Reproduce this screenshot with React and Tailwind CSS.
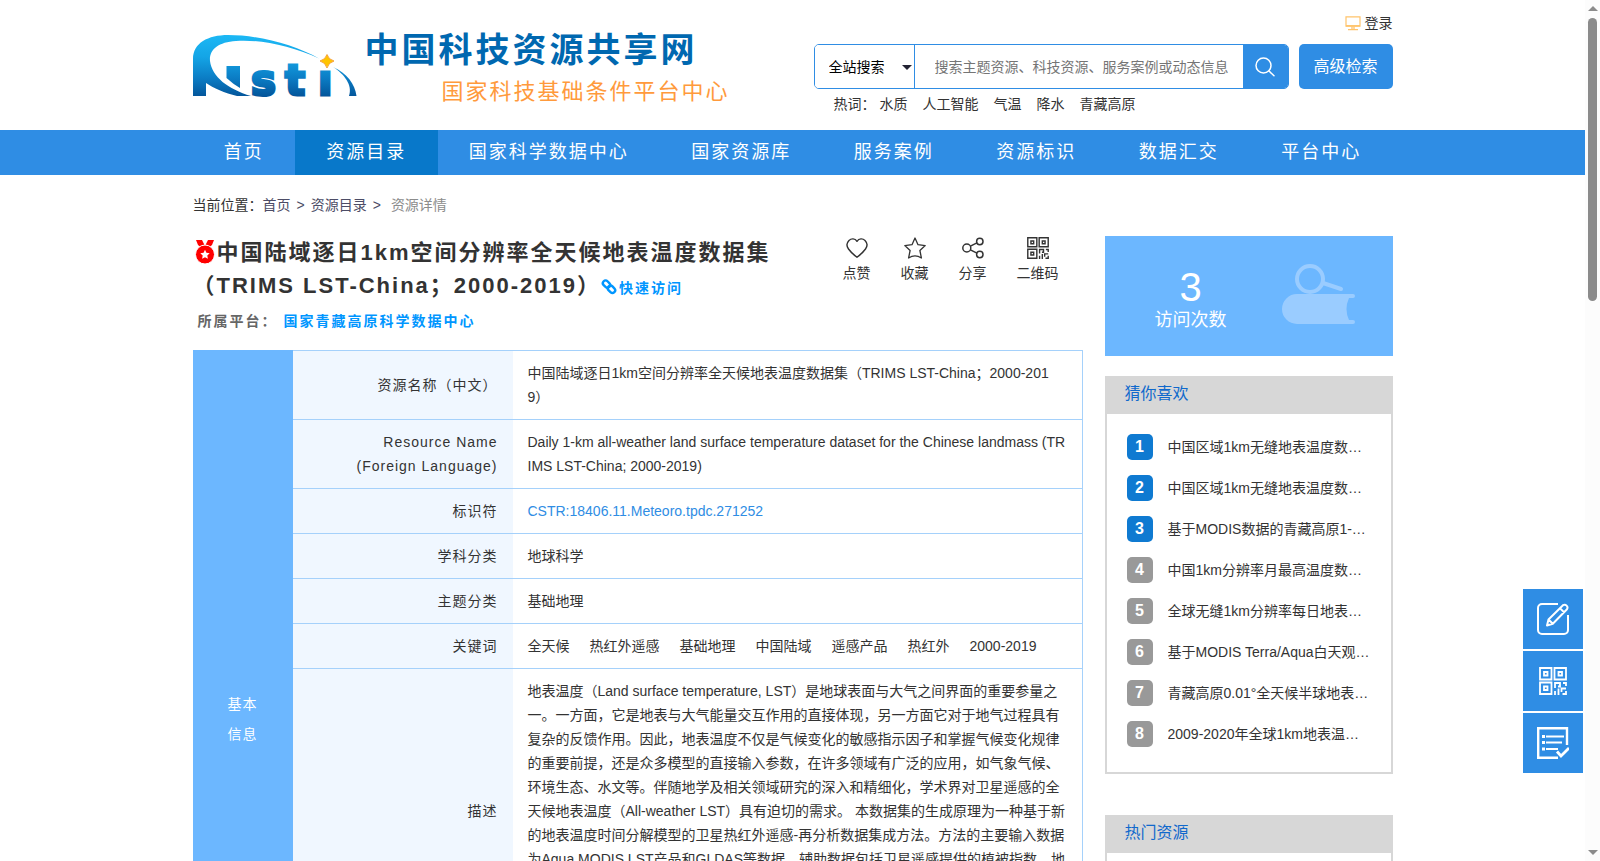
import { useState } from 'react';

const NAV = ['首页', '资源目录', '国家科学数据中心', '国家资源库', '服务案例', '资源标识', '数据汇交', '平台中心'];

const HOT_WORDS = ['水质', '人工智能', '气温', '降水', '青藏高原'];

const KEYWORDS = ['全天候', '热红外遥感', '基础地理', '中国陆域', '遥感产品', '热红外', '2000-2019'];

const RECOMMENDED = [
  '中国区域1km无缝地表温度数据集（2002-2020）',
  '中国区域1km无缝地表温度数据集（2002-2020）',
  '基于MODIS数据的青藏高原1-km分辨率地表温度数据',
  '中国1km分辨率月最高温度数据集（1901-2020）',
  '全球无缝1km分辨率每日地表温度数据集',
  '基于MODIS Terra/Aqua白天观测的地表温度数据',
  '青藏高原0.01°全天候半球地表温度数据集',
  '2009-2020年全球1km地表温度数据集',
];

const DESCRIPTION =
  '地表温度（Land surface temperature, LST）是地球表面与大气之间界面的重要参量之一。一方面，它是地表与大气能量交互作用的直接体现，另一方面它对于地气过程具有复杂的反馈作用。因此，地表温度不仅是气候变化的敏感指示因子和掌握气候变化规律的重要前提，还是众多模型的直接输入参数，在许多领域有广泛的应用，如气象气候、环境生态、水文等。伴随地学及相关领域研究的深入和精细化，学术界对卫星遥感的全天候地表温度（All-weather LST）具有迫切的需求。 本数据集的生成原理为一种基于新的地表温度时间分解模型的卫星热红外遥感-再分析数据集成方法。方法的主要输入数据为Aqua MODIS LST产品和GLDAS等数据，辅助数据包括卫星遥感提供的植被指数、地表反照率等。方法充分利用了卫星热红外遥感和再分析数据提供的地表温度高频分量、低频分量以及地表温度的空间相关性，最终重建得到较高质量的全天候地表温度数据集。评价结果表明，本数据集具有良好的图像质量和精度，可为研究提供支持。';

function Logo() {
  return (
    <svg width="164" height="62" viewBox="0 0 164 62" role="img" aria-label="Nsti" className="shrink-0">
      <defs>
        <linearGradient id="logoBlue" x1="0" y1="0" x2="0" y2="62" gradientUnits="userSpaceOnUse">
          <stop offset="0" stopColor="#1cb8f5" />
          <stop offset="0.35" stopColor="#14a5e6" />
          <stop offset="0.7" stopColor="#0b7cc4" />
          <stop offset="1" stopColor="#035499" />
        </linearGradient>
      </defs>
      <path d="M33.500 31h13.500v22q-7-4-13.500-10z" fill="url(#logoBlue)" />
      <path
        d="M0 61V24C0 8 15 0 35 0C66 0 102 10 126 23.500C99 11 65 4 43 6C25 7 16 15 17 26C19 42 35 54 58 61H44C32 58 20 53 13 48V61Z"
        fill="url(#logoBlue)"
      />
      <path d="M140 32C154 38 162 49 163.500 61H156C160 50 151 39 140 32Z" fill="url(#logoBlue)" />
      <text
        x="58 92 125"
        y="60"
        fill="url(#logoBlue)"
        stroke="url(#logoBlue)"
        strokeWidth="3"
        fontFamily="'DejaVu Sans', sans-serif"
        fontSize="42"
        fontWeight="bold"
      >
        stı
      </text>
      <path d="M134 19.500Q135.500 24.500 141 26Q135.500 27.500 134 33Q132.500 27.500 127 26Q132.500 24.500 134 19.500Z" fill="#ffc400" stroke="#f3901d" strokeWidth="0.800" />
    </svg>
  );
}

function MonitorIcon() {
  return (
    <svg width="16" height="15" viewBox="0 0 16 15" fill="none" stroke="#ffc36b">
      <path d="M1 .8h14v9.400H1z" strokeWidth="1.200" />
      <path d="M1 9.800h14" strokeWidth="1.500" />
      <path d="M7 10.500V13M9 10.500V13M3 13.700h10" strokeWidth="1.300" />
    </svg>
  );
}

function SearchIcon() {
  return (
    <svg width="20" height="20" viewBox="0 0 20 20" fill="none" stroke="#fff" strokeWidth="1.500" strokeLinecap="round">
      <circle cx="8.500" cy="8.500" r="7.500" />
      <path d="M14 14l5 4.800" />
    </svg>
  );
}

function MedalIcon() {
  return (
    <svg width="20" height="24" viewBox="0 0 20 24" className="mx-0.5 inline-block align-[-4px]">
      <path d="M1 0h6l2.500 5L6 7.500L3 5zM19 0h-6l-2.500 5L14 7.500L17 5z" fill="#f00" />
      <circle cx="10" cy="14.500" r="9.500" fill="#f00" stroke="#fff" strokeWidth="1" />
      <path
        d="M10 9.800l1.400 3 3.300.4-2.400 2.300.6 3.300-2.900-1.600-2.900 1.600.6-3.300-2.400-2.300 3.300-.4z"
        fill="#fff"
      />
    </svg>
  );
}

function ChainIcon() {
  return (
    <svg width="16" height="16" viewBox="0 0 16 16" fill="none" stroke="#0096ff" strokeWidth="2.400" className="mr-0.5 inline-block align-[-2px]">
      <rect x="1.500" y="2.400" width="8" height="5.400" rx="2.700" transform="rotate(45 5.500 5.100)" />
      <rect x="6.500" y="7.600" width="8" height="5.400" rx="2.700" transform="rotate(45 10.500 10.300)" />
    </svg>
  );
}

function HeartIcon() {
  return (
    <svg width="22" height="22" viewBox="0 0 22 22" fill="none" stroke="#333" strokeWidth="1.400" strokeLinejoin="round">
      <path d="M11 4.300C9 1.200 5.200 1.300 3 3.400C.6 5.800.5 9.200 2.500 12C4.500 14.800 8 18 11 20.300C14 18 17.500 14.800 19.500 12C21.500 9.200 21.400 5.800 19 3.400C16.800 1.300 13 1.200 11 4.300Z" />
    </svg>
  );
}

function StarIcon() {
  return (
    <svg width="22" height="22" viewBox="0 0 22 22" fill="none" stroke="#333" strokeWidth="1.300" strokeLinejoin="round">
      <path d="M11 1L14 7.700L21.200 8.600L15.900 13.500L17.400 21Q11 16.800 4.600 21L6.100 13.500L.8 8.600L8 7.700Z" />
    </svg>
  );
}

function ShareIcon() {
  return (
    <svg width="22" height="22" viewBox="0 0 22 22" fill="none" stroke="#333" strokeWidth="1.500">
      <circle cx="4.800" cy="11" r="4" />
      <circle cx="17.800" cy="4.500" r="3.200" />
      <circle cx="17.800" cy="17.500" r="3.200" />
      <path d="M8.400 9.200l6.500-3.300M8.400 12.800l6.500 3.300" />
    </svg>
  );
}

function QrIcon({ color, size }) {
  return (
    <svg width={size} height={size} viewBox="0 0 28 28" fill="none" stroke={color} strokeWidth="1.800">
      <path d="M1 1h11.500v11.500H1zM15.500 1H27v11.500H15.500zM1 15.500h11.500V27H1z" />
      <path d="M5 5h3.500v3.500H5zM19.500 5H23v3.500h-3.500zM5 19.500h3.500V23H5z" />
      <path d="M16 21v-5h5v3.500h-2M24 16h3v3M27 21.500h-4.500V25M19.500 21.500V28M16 24v4M27 24v3h-3.500" />
    </svg>
  );
}

function BookIcon() {
  return (
    <svg width="76" height="60" viewBox="0 0 76 60" fill="none" stroke="#9accff">
      <circle cx="29" cy="15" r="13" strokeWidth="4" />
      <path d="M42 19l18 6" strokeWidth="4" strokeLinecap="round" />
      <path
        d="M16 30H72a2 2 0 0 1 0 4h-4q-5 11 0 22h4a2 2 0 0 1 0 4H16a15 15 0 0 1 0-30z"
        fill="#9accff"
        stroke="none"
      />
    </svg>
  );
}

function EditIcon() {
  return (
    <svg width="32" height="32" viewBox="0 0 32 32" fill="none" stroke="#fff" strokeWidth="2" strokeLinejoin="round">
      <path d="M21 1H5a4 4 0 0 0-4 4v22a4 4 0 0 0 4 4h22a4 4 0 0 0 4-4V12" />
      <path d="M10 22.500l1.500-6L26 2.200a2.900 2.900 0 0 1 4 4L15.800 20.700zM11.500 16.500l4.300 4.200M23 5.200l4.200 4.200" />
    </svg>
  );
}

function SurveyIcon() {
  return (
    <svg width="32" height="32" viewBox="0 0 32 32" fill="none" stroke="#fff" strokeWidth="2.400">
      <path d="M21 30.800H1.200V1.200H30V18" />
      <path d="M9 9.500h18M9 15.500h16M9 22h12" strokeWidth="2.200" />
      <path d="M5 9.500h3M5 15.500h3M5 22h3" strokeWidth="3.200" />
      <path d="M20 24.500l4 4.500 8-8" strokeWidth="2.800" />
    </svg>
  );
}

function Header() {
  const [scope, setScope] = useState('all');
  const [query, setQuery] = useState('');

  return (
    <header className="mx-auto flex h-[130px] w-full max-w-[1200px] justify-between">
      <div className="flex">
        <a href="#" className="pt-[35px]">
          <Logo />
        </a>
        <div className="pt-[26px] pl-2">
          <p className="text-[34px] leading-12 font-bold tracking-[3px] whitespace-nowrap text-[#0068b0]">
            中国科技资源共享网
          </p>
          <p className="pt-0.5 pl-[77px] text-[22px] leading-8 tracking-[2px] whitespace-nowrap text-[#ff9a3c]">
            国家科技基础条件平台中心
          </p>
        </div>
      </div>

      <div className="w-[579px] pt-3">
        <div className="flex h-[22px] justify-end">
          <a href="#" className="flex items-center gap-1 text-sm">
            <MonitorIcon />
            登录
          </a>
        </div>
        <form className="mt-2.5 flex h-[45px] gap-2.5" onSubmit={(e) => e.preventDefault()}>
          <div className="flex min-w-0 flex-1 overflow-hidden rounded-[5px] border border-[#2f8de4]">
            <div className="relative w-[100px] shrink-0 border-r border-[#2f8de4]">
              <select
                aria-label="搜索范围"
                value={scope}
                onChange={(e) => setScope(e.target.value)}
                className="h-full w-full appearance-none bg-white pl-3.5 text-sm text-black outline-none"
              >
                <option value="all">全站搜索</option>
                <option value="resource">资源搜索</option>
              </select>
              <svg width="10" height="5" viewBox="0 0 10 5" className="pointer-events-none absolute top-5 right-0.5">
                <path d="M0 0h10L5 5z" fill="#223" />
              </svg>
            </div>
            <input
              type="text"
              aria-label="搜索"
              value={query}
              onChange={(e) => setQuery(e.target.value)}
              placeholder="搜索主题资源、科技资源、服务案例或动态信息"
              className="min-w-0 flex-1 pl-5 text-sm outline-none placeholder:text-[#757575]"
            />
            <button type="submit" aria-label="搜索" className="flex w-[45px] shrink-0 items-center justify-center bg-[#2f8de4]">
              <SearchIcon />
            </button>
          </div>
          <button type="button" className="w-[94px] rounded-[5px] bg-[#2f8de4] text-base text-white">
            高级检索
          </button>
        </form>
        <div className="flex pt-1 pl-5 text-sm leading-[22px]">
          <span className="mr-1">热词：</span>
          <div className="flex gap-[15px]">
            {HOT_WORDS.map((w) => (
              <a key={w} href="#">{w}</a>
            ))}
          </div>
        </div>
      </div>
    </header>
  );
}

function NavBar() {
  return (
    <nav className="bg-[#2f8de4]">
      <div className="mx-auto flex w-full max-w-[1200px]">
        {NAV.map((item, i) => (
          <a
            key={item}
            href="#"
            className={`flex-auto px-[31px] text-center text-lg leading-[45px] tracking-[2px] whitespace-nowrap text-white ${i === 1 ? 'bg-[#0878ca]' : ''}`}
          >
            {item}
          </a>
        ))}
      </div>
    </nav>
  );
}

function Action({ icon, label }) {
  return (
    <button type="button" className="flex flex-col items-center gap-0.5 text-sm leading-6">
      {icon}
      {label}
    </button>
  );
}

function Row({ label, head, children }) {
  return (
    <tr>
      {head}
      <th scope="row" className="border-t border-[#a5d1fb] bg-[#f0f7ff] px-[15px] py-2.5 text-right font-normal tracking-[1px]">
        {label}
      </th>
      <td className="border-t border-r border-[#a5d1fb] px-[15px] py-2.5 break-all">{children}</td>
    </tr>
  );
}

function DetailTable() {
  const head = (
    <th scope="rowgroup" rowSpan={10} className="bg-[#6cb7ff] px-8 text-center leading-[30px] font-normal tracking-[1px] text-white">
      基本
      <br />
      信息
    </th>
  );

  return (
    <table className="mt-[17px] w-full table-fixed border-separate border-spacing-0 text-sm leading-6">
      <colgroup>
        <col className="w-[100px]" />
        <col className="w-[220px]" />
        <col />
      </colgroup>
      <tbody>
        <Row head={head} label="资源名称（中文）">中国陆域逐日1km空间分辨率全天候地表温度数据集（TRIMS LST-China；2000-2019）</Row>
        <Row label={<>Resource Name<br />(Foreign Language)</>}>
          Daily 1-km all-weather land surface temperature dataset for the Chinese landmass (TRIMS LST-China; 2000-2019)
        </Row>
        <Row label="标识符">
          <a href="#" className="text-[#2f8de4]">CSTR:18406.11.Meteoro.tpdc.271252</a>
        </Row>
        <Row label="学科分类">地球科学</Row>
        <Row label="主题分类">基础地理</Row>
        <Row label="关键词">
          <span className="flex gap-5">
            {KEYWORDS.map((k) => (
              <span key={k}>{k}</span>
            ))}
          </span>
        </Row>
        <Row label="描述">{DESCRIPTION}</Row>
        <Row label="数据格式">TIFF</Row>
        <Row label="时间范围">2000-2019</Row>
        <Row label="共享方式">开放共享</Row>
      </tbody>
    </table>
  );
}

function Panel({ title, children }) {
  return (
    <section className="border-2 border-t-0 border-[#d7d7d7]">
      <h2 className="h-[38px] bg-[#d7d7d7] pl-[18px] text-base leading-9 text-[#1069cc]">{title}</h2>
      {children}
    </section>
  );
}

function Sidebar() {
  return (
    <aside className="w-72 shrink-0">
      <div className="flex h-[120px] items-center bg-[#6cb7ff] text-white">
        <div className="w-[172px] pt-2 text-center">
          <div className="text-[40px] leading-10">3</div>
          <div className="text-lg leading-[26px]">访问次数</div>
        </div>
        <div className="pb-1 pl-1">
          <BookIcon />
        </div>
      </div>
      <div className="mt-5 space-y-[41px]">
        <Panel title="猜你喜欢">
          <ol className="space-y-[15px] pt-5 pr-5 pb-[25px] pl-5">
            {RECOMMENDED.map((title, i) => (
              <li key={i} className="flex h-[26px] items-center">
                <span
                  className={`w-[26px] shrink-0 rounded-[5px] text-center text-base leading-[26px] font-bold text-white ${i < 3 ? 'bg-[#0f7ad1]' : 'bg-[#999]'}`}
                >
                  {i + 1}
                </span>
                <a href="#" className="ml-[15px] truncate text-sm leading-6">{title}</a>
              </li>
            ))}
          </ol>
        </Panel>
        <Panel title="热门资源">
          <div className="h-[360px]" />
        </Panel>
      </div>
    </aside>
  );
}

function FloatTools() {
  return (
    <div className="fixed right-[17px] bottom-[88px] flex flex-col gap-0.5">
      <button type="button" aria-label="意见反馈" className="flex size-[60px] items-center justify-center bg-[#2f8de4]">
        <EditIcon />
      </button>
      <button type="button" aria-label="二维码" className="flex size-[60px] items-center justify-center bg-[#2f8de4]">
        <QrIcon color="#fff" size={28} />
      </button>
      <button type="button" aria-label="问卷调查" className="flex size-[60px] items-center justify-center bg-[#2f8de4]">
        <SurveyIcon />
      </button>
    </div>
  );
}

function ScrollTrack() {
  return (
    <div className="flex w-[15px] shrink-0 flex-col items-center bg-[#fcfcfc] py-1.5">
      <svg width="10" height="5" viewBox="0 0 10 5"><path d="M0 5h10L5 0z" fill="#8b8b8b" /></svg>
      <div className="mt-[7px] h-1/3 w-[9px] rounded-full bg-[#8b8b8b]" />
      <svg width="10" height="5" viewBox="0 0 10 5" className="mt-auto"><path d="M0 0h10L5 5z" fill="#8b8b8b" /></svg>
    </div>
  );
}

export default function App() {
  return (
    <div className="flex h-screen overflow-hidden bg-white font-['Liberation_Sans','Noto_Sans_CJK_SC',sans-serif] text-[#333] [text-spacing-trim:space-all]">
      <div className="min-w-0 flex-1 overflow-hidden">
        <Header />
        <NavBar />
        <div className="mx-auto w-full max-w-[1200px]">
          <div className="flex pt-[15px] text-sm leading-[30px] text-[#4c4c66]">
            <span className="text-[#333]">当前位置：</span>
            <a href="#">首页</a>
            <span className="mx-1.5">&gt;</span>
            <a href="#">资源目录</a>
            <span className="mr-2.5 ml-1.5">&gt;</span>
            <span className="text-[#8c8c8c]">资源详情</span>
          </div>

          <div className="flex gap-[22px] pt-4">
            <main className="min-w-0 flex-1">
              <div className="flex items-start justify-between pr-6">
                <h1 className="w-[600px] text-[22px] leading-[33px] font-bold tracking-[2px]">
                  <MedalIcon />
                  中国陆域逐日1km空间分辨率全天候地表温度数据集（TRIMS LST-China；2000-2019）
                  <a href="#" className="text-sm whitespace-nowrap text-[#0096ff]">
                    <ChainIcon />
                    快速访问
                  </a>
                </h1>
                <div className="flex gap-[30px] pt-px">
                  <Action icon={<HeartIcon />} label="点赞" />
                  <Action icon={<StarIcon />} label="收藏" />
                  <Action icon={<ShareIcon />} label="分享" />
                  <Action icon={<QrIcon color="#333" size={22} />} label="二维码" />
                </div>
              </div>
              <p className="mt-[7px] pl-[5px] text-sm leading-6 font-bold tracking-[2px] text-[#666]">
                所属平台：
                <a href="#" className="ml-1.5 text-[#0096ff]">国家青藏高原科学数据中心</a>
              </p>
              <DetailTable />
            </main>
            <Sidebar />
          </div>
        </div>
      </div>
      <ScrollTrack />
      <FloatTools />
    </div>
  );
}
